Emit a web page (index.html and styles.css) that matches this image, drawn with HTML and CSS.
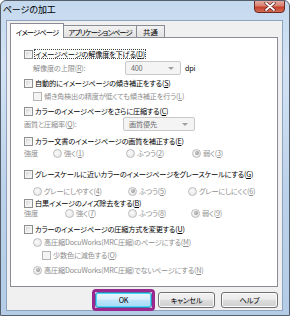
FILE: index.html
```html
<!DOCTYPE html>
<html lang="ja">
<head>
<meta charset="utf-8">
<link rel="stylesheet" href="styles.css">
</head>
<body>
<div class="window">
  <div class="titlebar">
    <span class="title">ページの加工</span>
    <div class="close">
      <svg width="12" height="9" viewBox="0 0 12 9"><path d="M2 1 L10 8 M10 1 L2 8" stroke="#5a1e1e" stroke-width="3.2" stroke-linecap="round"/><path d="M2 1 L10 8 M10 1 L2 8" stroke="#fff" stroke-width="1.8" stroke-linecap="round"/></svg>
    </div>
  </div>
  <div class="client">
    <div class="tabs">
      <div class="tab active t1">イメージページ</div>
      <div class="tab t2">アプリケーションページ</div>
      <div class="tab t3">共通</div>
    </div>
    <div class="panel">
      <div class="row r1"><span class="cb"></span><span class="txt focus">イメージページの解像度を下げる(<u>D</u>)</span></div>
      <div class="row r2 in1"><span class="lbl dis w92">解像度の上限(<u>R</u>):</span><span class="select dis w56">400<i class="arrow"></i></span><span class="unit">dpi</span></div>
      <div class="row r3"><span class="cb"></span><span class="txt">自動的にイメージページの傾き補正をする(<u>S</u>)</span></div>
      <div class="row r4 in1"><span class="cb dcb"></span><span class="txt dis">傾き角検出の精度が低くても傾き補正を行う(<u>L</u>)</span></div>
      <div class="row r5"><span class="cb"></span><span class="txt">カラーのイメージページをさらに圧縮する(<u>C</u>)</span></div>
      <div class="row r6"><span class="lbl dis w99">画質と圧縮率(<u>Q</u>):</span><span class="select dis w72">画質優先<i class="arrow"></i></span></div>
      <div class="row r7"><span class="cb"></span><span class="txt">カラー文書のイメージページの画質を補正する(<u>E</u>)</span></div>
      <div class="row r8"><span class="lbl dis w29">強度</span><span class="opt w73"><span class="rd"></span><span class="dis">強く(<u>1</u>)</span></span><span class="opt w66"><span class="rd"></span><span class="dis">ふつう(<u>2</u>)</span></span><span class="opt"><span class="rd on"></span><span class="dis">弱く(<u>3</u>)</span></span></div>
      <div class="row r9"><span class="cb"></span><span class="txt">グレースケールに近いカラーのイメージページをグレースケールにする(<u>G</u>)</span></div>
      <div class="row r10 in1"><span class="opt w95"><span class="rd"></span><span class="dis">グレーにしやすく(<u>4</u>)</span></span><span class="opt w60"><span class="rd on"></span><span class="dis">ふつう(<u>5</u>)</span></span><span class="opt"><span class="rd"></span><span class="dis">グレーにしにくく(<u>6</u>)</span></span></div>
      <div class="row r11"><span class="cb"></span><span class="txt">白黒イメージのノイズ除去をする(<u>B</u>)</span></div>
      <div class="row r12"><span class="lbl dis w41">強度</span><span class="opt w63"><span class="rd"></span><span class="dis">強く(<u>7</u>)</span></span><span class="opt w63"><span class="rd"></span><span class="dis">ふつう(<u>8</u>)</span></span><span class="opt"><span class="rd on"></span><span class="dis">弱く(<u>9</u>)</span></span></div>
      <div class="row r13"><span class="cb"></span><span class="txt">カラーのイメージページの圧縮方式を変更する(<u>U</u>)</span></div>
      <div class="row r14 in1"><span class="opt"><span class="rd"></span><span class="dis">高圧縮DocuWorks(MRC圧縮)のページにする(<u>M</u>)</span></span></div>
      <div class="row r15 in2"><span class="cb dcb"></span><span class="txt dis">少数色に減色する(<u>O</u>)</span></div>
      <div class="row r16 in1"><span class="opt"><span class="rd on"></span><span class="dis">高圧縮DocuWorks(MRC圧縮)でないページにする(<u>N</u>)</span></span></div>
    </div>
    <div class="buttons">
      <div class="btn default">OK<span class="mark"></span></div>
      <div class="btn">キャンセル</div>
      <div class="btn">ヘルプ</div>
    </div>
  </div>
</div>
</body>
</html>
```

FILE: styles.css
```css
* { box-sizing: border-box; }
html, body { margin: 0; padding: 0; background: #fff; }
body { font-family: "Noto Sans CJK JP", "Noto Sans", sans-serif; }
.window {
  width: 290px; height: 316px;
  display: flex; flex-direction: column;
  background: linear-gradient(180deg, #c4d8ee 0%, #d3e3f4 20%, #bcd2ea 60%, #b4cce6 100%);
  border: 1px solid #555e6b;
  border-radius: 6px 6px 0 0;
  overflow: hidden;
}
.titlebar {
  height: 19px; flex: none;
  display: flex; justify-content: space-between; align-items: flex-start;
  padding-left: 2px; padding-right: 4px;
}
.title {
  font-size: 9px; line-height: 9px; margin-top: 4px; color: #000;
  letter-spacing: -0.2px;
}
.close {
  width: 31px; height: 13px; margin-top: -1px;
  background: linear-gradient(180deg, #e5a99f 0%, #d8806f 45%, #c5402c 55%, #d36a52 100%);
  border: 1px solid #6b2a23;
  border-radius: 0 0 4px 4px;
  display: flex; align-items: center; justify-content: center;
}
.close svg { display: block; }
.client {
  flex: 1; margin: 0 6px 4px 5px;
  background: #f0f0f0;
  border: 1px solid #8ea3bd;
  padding: 2px 4px 0 3px;
  display: flex; flex-direction: column;
}
.tabs { display: flex; height: 14px; align-items: flex-end; position: relative; z-index: 1; }
.tab {
  height: 12px; font-size: 7.4px; line-height: 11px; padding: 0;
  text-align: center; white-space: nowrap;
  border: 1px solid #898c95; border-bottom: none; border-left: none;
  background: linear-gradient(180deg, #f2f2f2, #e2e2e2);
  font-feature-settings: "palt"; letter-spacing: -1px; color: #000;
}
.t1 { width: 54px; }
.t2 { width: 73px; }
.t3 { width: 28px; letter-spacing: 0; }
.tab:first-child { border-left: 1px solid #898c95; }
.tab.active {
  height: 15px; background: #fff; border-left: 1px solid #898c95;
  padding-top: 2px; margin-bottom: -1px; line-height: 11px;
}
.panel {
  height: 250px; flex: none;
  background: #fff; border: 1px solid #898c95;
  padding: 10px 0 0 13px;
  display: flex; flex-direction: column;
}
.row {
  height: 12px; display: flex; align-items: center; flex: none;
  font-size: 7.2px; line-height: 12px; color: #000; letter-spacing: -0.2px;
  font-feature-settings: "palt"; white-space: nowrap;
}
.r1 { margin-top: 0; }
.r2 { margin-top: 2px; }
.r3 { margin-top: 3px; }
.r4 { margin-top: 1px; }
.r5 { margin-top: 3px; }
.r6 { margin-top: 1px; }
.r7 { margin-top: 5px; }
.r8 { margin-top: 0; }
.r9 { margin-top: 9px; }
.r10 { margin-top: 5px; }
.r11 { margin-top: 0; }
.r12 { margin-top: -2px; }
.r13 { margin-top: 4px; }
.r14 { margin-top: 1px; }
.r15 { margin-top: 1px; }
.r16 { margin-top: 3px; }
.in1 { padding-left: 9px; }
.in2 { padding-left: 18px; }
u { text-decoration: underline; text-underline-offset: 1px; }
.dis { color: #8d8d8d; }
.cb {
  width: 9px; height: 9px; flex: none; margin-right: 1px;
  border: 1px solid #8e8f8f;
  background: linear-gradient(135deg, #cfcfcf 0%, #f4f4f4 70%, #fff 100%);
  box-shadow: inset 0 0 0 1px #f4f4f4;
}
.cb.dcb { border-color: #b5b5b5; background: #f4f4f4; }
.txt { padding: 0 1px; line-height: 10px; }
.focus { outline: 1px dotted #444; outline-offset: -1px; }
.lbl { flex: none; }
.w29 { width: 29px; } .w41 { width: 41px; } .w92 { width: 92px; } .w99 { width: 99px; }
.w56 { width: 56px; } .w72 { width: 72px; } .w73 { width: 73px; } .w66 { width: 66px; }
.w95 { width: 95px; } .w60 { width: 60px; } .w63 { width: 63px; }
.select {
  height: 14px; flex: none; position: relative;
  border: 1px solid #c8c8c8; border-radius: 2px; background: #f4f4f4;
  padding-left: 5px; line-height: 12px; color: #6d6d6d;
}
.arrow {
  position: absolute; right: 6px; top: 5px;
  border-left: 3px solid transparent; border-right: 3px solid transparent;
  border-top: 3px solid #a0a0a0;
}
.unit { margin-left: 4px; }
.opt { display: flex; align-items: center; flex: none; }
.rd {
  width: 9px; height: 9px; border-radius: 50%; flex: none; margin-right: 2px;
  border: 1px solid #bcbcbc;
  background: radial-gradient(circle at 40% 40%, #fafafa, #e3e3e3);
  position: relative;
}
.rd.on::after {
  content: ""; position: absolute; left: 1.5px; top: 1.5px; width: 4px; height: 4px; border-radius: 50%;
  background: radial-gradient(circle at 40% 40%, #c8c8c8, #8a8a8a);
}
.buttons {
  display: flex; justify-content: flex-end; gap: 6px;
  padding-top: 5px;
}
.btn {
  width: 57px; height: 16px; position: relative;
  border: 1px solid #707070; border-radius: 3px;
  background: linear-gradient(180deg, #f2f2f2 0%, #ebebeb 45%, #dddddd 50%, #cfcfcf 100%);
  box-shadow: inset 0 0 0 1px #fbfbfb;
  font-size: 7.2px; line-height: 14px; text-align: center; color: #000;
  font-feature-settings: "palt"; letter-spacing: -0.2px;
}
.btn.default { border-color: #3c7fb1; box-shadow: inset 0 0 0 1px #48d8fb; background: linear-gradient(180deg, #eaf6fd 0%, #d9f0fc 45%, #bee6fd 50%, #a7d9f5 100%); }
.mark {
  position: absolute; left: -4px; top: -4px; right: -4px; bottom: -4px;
  border: 3px solid #99288f; border-radius: 4px;
}
```
